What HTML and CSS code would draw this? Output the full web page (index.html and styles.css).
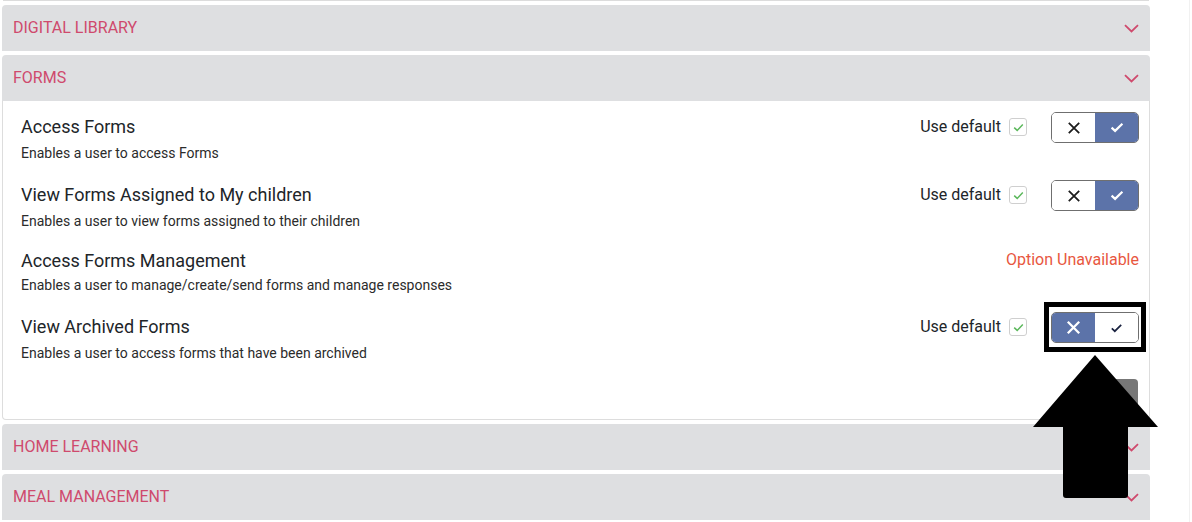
FILE: index.html
```html
<!DOCTYPE html>
<html lang="en">
<head>
<meta charset="utf-8">
<title>Permissions</title>
<link rel="stylesheet" href="styles.css">
</head>
<body>
<div class="page">
  <div class="content">
    <div class="prev-edge"></div>

    <section class="panel">
      <header class="panel-head">
        <span class="panel-title">Digital Library</span>
        <svg class="chev" width="15" height="9" viewBox="0 0 15 9"><path d="M1 1.2 L7.5 7.5 L14 1.2" fill="none" stroke="currentColor" stroke-width="1.8"/></svg>
      </header>
    </section>

    <section class="panel">
      <header class="panel-head">
        <span class="panel-title">Forms</span>
        <svg class="chev" width="15" height="9" viewBox="0 0 15 9"><path d="M1 1.2 L7.5 7.5 L14 1.2" fill="none" stroke="currentColor" stroke-width="1.8"/></svg>
      </header>
      <div class="panel-body">
        <div class="perm">
          <div class="perm-title">Access Forms</div>
          <div class="ctrl">
            <span class="ud-label">Use default</span>
            <span class="cbox"><svg width="11" height="9" viewBox="0 0 11 9"><path d="M1.2 4.6 L4.2 7.4 L9.8 1.6" fill="none" stroke="#5cb85c" stroke-width="1.5"/></svg></span>
            <div class="toggle">
              <span class="tg off-plain"><svg width="14" height="14" viewBox="0 0 14 14"><path d="M1.8 1.8 L12.2 12.2 M12.2 1.8 L1.8 12.2" stroke="#1d1d1d" stroke-width="1.8" fill="none"/></svg></span>
              <span class="tg on-blue"><svg width="14" height="11" viewBox="0 0 14 11"><path d="M1.6 5.6 L5.1 8.9 L12.4 1.8" fill="none" stroke="#fff" stroke-width="2.2"/></svg></span>
            </div>
          </div>
          <div class="perm-desc">Enables a user to access Forms</div>
        </div>

        <div class="perm">
          <div class="perm-title">View Forms Assigned to My children</div>
          <div class="ctrl">
            <span class="ud-label">Use default</span>
            <span class="cbox"><svg width="11" height="9" viewBox="0 0 11 9"><path d="M1.2 4.6 L4.2 7.4 L9.8 1.6" fill="none" stroke="#5cb85c" stroke-width="1.5"/></svg></span>
            <div class="toggle">
              <span class="tg off-plain"><svg width="14" height="14" viewBox="0 0 14 14"><path d="M1.8 1.8 L12.2 12.2 M12.2 1.8 L1.8 12.2" stroke="#1d1d1d" stroke-width="1.8" fill="none"/></svg></span>
              <span class="tg on-blue"><svg width="14" height="11" viewBox="0 0 14 11"><path d="M1.6 5.6 L5.1 8.9 L12.4 1.8" fill="none" stroke="#fff" stroke-width="2.2"/></svg></span>
            </div>
          </div>
          <div class="perm-desc">Enables a user to view forms assigned to their children</div>
        </div>

        <div class="perm">
          <div class="perm-title">Access Forms Management</div>
          <div class="ctrl">
            <span class="unavailable">Option Unavailable</span>
          </div>
          <div class="perm-desc">Enables a user to manage/create/send forms and manage responses</div>
        </div>

        <div class="perm">
          <div class="perm-title">View Archived Forms</div>
          <div class="ctrl">
            <span class="ud-label">Use default</span>
            <span class="cbox"><svg width="11" height="9" viewBox="0 0 11 9"><path d="M1.2 4.6 L4.2 7.4 L9.8 1.6" fill="none" stroke="#5cb85c" stroke-width="1.5"/></svg></span>
            <div class="toggle">
              <span class="tg off-blue"><svg width="15" height="15" viewBox="0 0 15 15"><path d="M1.8 1.8 L13.2 13.2 M13.2 1.8 L1.8 13.2" stroke="#fff" stroke-width="2.3" fill="none"/></svg></span>
              <span class="tg on-plain"><svg width="13" height="10" viewBox="0 0 13 10"><path d="M1.8 5.4 L4.8 8.2 L11.2 1.8" fill="none" stroke="#1a2340" stroke-width="1.7"/></svg></span>
            </div>
          </div>
          <div class="perm-desc">Enables a user to access forms that have been archived</div>
        </div>

        <div class="actions">
          <button class="save-btn" type="button">Save</button>
        </div>
      </div>
    </section>

    <section class="panel">
      <header class="panel-head">
        <span class="panel-title">Home Learning</span>
        <svg class="chev" width="15" height="9" viewBox="0 0 15 9"><path d="M1 1.2 L7.5 7.5 L14 1.2" fill="none" stroke="currentColor" stroke-width="1.8"/></svg>
      </header>
    </section>

    <section class="panel">
      <header class="panel-head">
        <span class="panel-title">Meal Management</span>
        <svg class="chev" width="15" height="9" viewBox="0 0 15 9"><path d="M1 1.2 L7.5 7.5 L14 1.2" fill="none" stroke="currentColor" stroke-width="1.8"/></svg>
      </header>
    </section>
  </div>
  <div class="rail"></div>

  <div class="anno-box"></div>
  <svg class="anno-arrow" width="125" height="143" viewBox="0 0 125 143">
    <path d="M62 0 L125 72 L95 72 L95 140 Q95 143 92 143 L33 143 Q30 143 30 140 L30 72 L0 72 Z" fill="#000"/>
  </svg>
</div>
</body>
</html>
```

FILE: styles.css
```css
* { box-sizing: border-box; }

html, body {
  margin: 0;
  padding: 0;
  background: #fff;
}

body {
  font-family: Roboto, "Liberation Sans", Arial, sans-serif;
  color: #212529;
  overflow: hidden;
}

.page {
  position: relative;
  display: flex;
  width: 1192px;
  height: 522px;
  overflow: hidden;
}

.content {
  width: 1148px;
  margin-left: 2px;
}

.rail {
  margin-left: auto;
  width: 3px;
  height: 522px;
  border-left: 1px solid #f1f1f1;
}

.prev-edge {
  height: 1px;
  margin: 0 1px 4px;
  background: #dcdcdc;
}

.panel {
  margin-bottom: 4px;
}

.panel-head {
  height: 46px;
  background: #dedfe1;
  border-radius: 4px 4px 0 0;
  display: flex;
  align-items: center;
  justify-content: space-between;
  padding: 0 11px 1px 11px;
  color: #cf4a6d;
}

.panel-title {
  font-size: 16px;
  text-transform: uppercase;
  letter-spacing: 0;
}

.chev {
  display: block;
  margin-top: 1px;
}

.panel-body {
  border: 1px solid #dddddd;
  border-top: none;
  border-radius: 0 0 4px 4px;
  padding: 10px 10px 6px 18px;
}

.perm {
  display: grid;
  grid-template-columns: 1fr auto;
  align-items: center;
  margin-bottom: 16px;
}

.perm-title {
  font-size: 18px;
  line-height: 28px;
  color: #212529;
}

.perm-desc {
  grid-column: 1 / -1;
  font-size: 14px;
  line-height: 20px;
  color: #2b2b2b;
}

.ctrl {
  display: flex;
  align-items: center;
}

.ud-label {
  font-size: 16px;
  color: #212529;
  margin-right: 8px;
  margin-top: -1px;
}

.cbox {
  width: 18px;
  height: 18px;
  border: 1px solid #cfcfcf;
  border-radius: 3px;
  background: #fff;
  display: flex;
  align-items: center;
  justify-content: center;
  margin-right: 24px;
}

.toggle {
  display: flex;
  width: 88px;
  height: 31px;
  margin: 1px 0 0;
  border: 1px solid #6f6f6f;
  border-radius: 5px;
  overflow: hidden;
}

.tg {
  flex: 1;
  display: flex;
  align-items: center;
  justify-content: center;
}

.off-plain, .on-plain { background: #fff; }
.on-blue, .off-blue { background: #5c73a9; }

.unavailable {
  font-size: 16px;
  line-height: 24px;
  color: #e8573f;
  margin-top: -2px;
}

.actions {
  display: flex;
  justify-content: flex-end;
  margin-top: 2px;
  padding-right: 1px;
}

.save-btn {
  width: 64px;
  height: 34px;
  border: none;
  border-radius: 4px;
  background: #777777;
  color: #fff;
  font-family: inherit;
  font-size: 15px;
}

.anno-box {
  position: absolute;
  left: 1044px;
  top: 302px;
  width: 102px;
  height: 50px;
  border: 5px solid #000;
}

.anno-arrow {
  position: absolute;
  left: 1033px;
  top: 355px;
}
```
